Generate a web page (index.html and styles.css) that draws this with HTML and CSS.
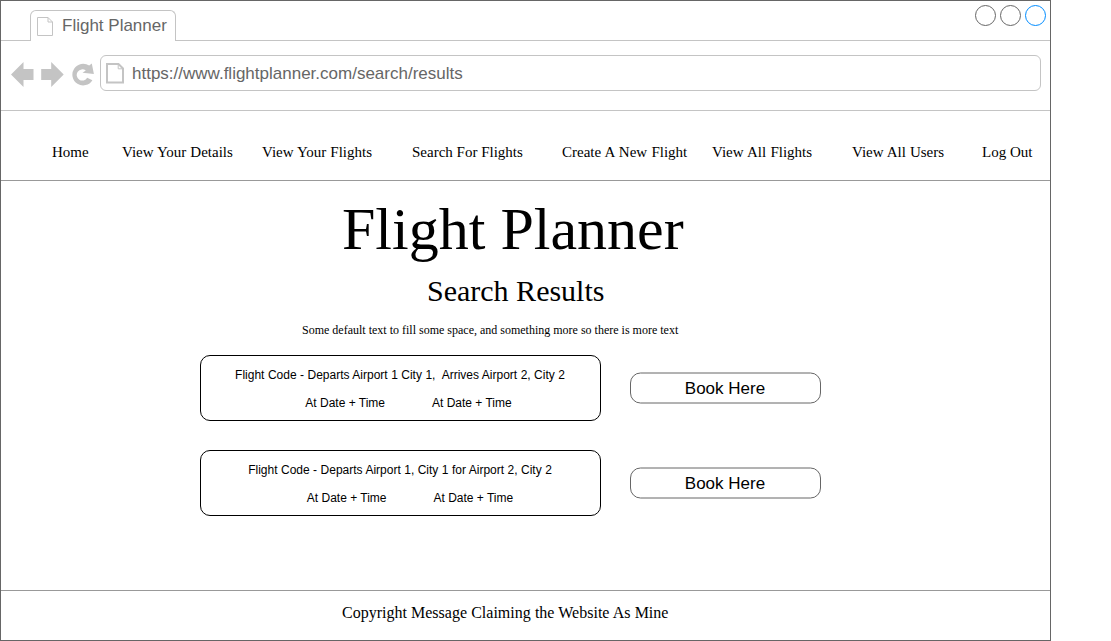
FILE: index.html
```html
<!DOCTYPE html>
<html lang="en">
<head>
<meta charset="utf-8">
<title>Flight Planner</title>
<link rel="stylesheet" href="styles.css">
</head>
<body>
<div class="window">
  <header class="tab-strip">
    <div class="tab">
      <svg class="tab-icon" width="18" height="20" viewBox="0 0 18 20"><path d="M1.5 1.5H12L16.5 6V19.5H1.5ZM12 1.5V6H16.5"/></svg>
      <span>Flight Planner</span>
    </div>
    <svg class="controls" width="74" height="24" viewBox="0 0 74 24">
      <circle cx="12.5" cy="12.5" r="10"/><circle cx="37.5" cy="12.5" r="10"/><circle class="accent" cx="62.5" cy="12.5" r="10"/>
    </svg>
  </header>
  <div class="toolbar">
    <svg class="nav-icons" width="84" height="26" viewBox="0 0 84 26">
      <path d="M0 12.5L12.5 0V7H22.5V18H12.5V25Z"/>
      <path d="M52.7 12.5L40.2 0V7H30.2V18H40.2V25Z"/>
      <path d="M80.8 1.5L82.9 12L71.5 10.7L74.8 8.6A5.6 5.6 0 1 0 76.2 15.7L81.4 18.2A10.8 10.8 0 1 1 78.2 3.6Z"/>
    </svg>
    <div class="address">
      <svg class="page-icon" width="20" height="22" viewBox="0 0 20 22"><path d="M2 2H13.5L18 6.5V20.5H2Z"/><path class="fold" d="M13.2 2V6.8H18"/></svg>
      <span class="url">https://www.flightplanner.com/search/results</span>
    </div>
  </div>
  <nav class="menu">
    <a>Home</a><a class="snug">View Your Details</a><a class="snug">View Your Flights</a><a>Search For Flights</a><a class="loose">Create A New Flight</a><a class="loose">View All Flights</a><a class="snug">View All Users</a><a>Log Out</a>
  </nav>
  <main class="content">
    <h1 class="title">Flight Planner</h1>
    <h2 class="subtitle">Search Results</h2>
    <p class="intro">Some default text to fill some space, and something more so there is more text</p>
    <section class="results">
      <div class="result">
        <div class="flight">
          <div class="route">Flight Code - Departs Airport 1 City 1,&nbsp; Arrives Airport 2, City 2</div>
          <div class="times"><span>At Date + Time</span><span>At Date + Time</span></div>
        </div>
        <div class="book">
          <svg class="book-frame" width="192" height="32" viewBox="0 0 192 32"><rect x=".5" y="1" width="190" height="30" rx="10"/></svg>
          <span class="book-label">Book Here</span>
        </div>
      </div>
      <div class="result">
        <div class="flight">
          <div class="route">Flight Code - Departs Airport 1, City 1 for Airport 2, City 2</div>
          <div class="times times-wide"><span>At Date + Time</span><span>At Date + Time</span></div>
        </div>
        <div class="book">
          <svg class="book-frame" width="192" height="32" viewBox="0 0 192 32"><rect x=".5" y="1" width="190" height="30" rx="10"/></svg>
          <span class="book-label">Book Here</span>
        </div>
      </div>
    </section>
  </main>
  <footer class="footer">Copyright Message Claiming the Website As Mine</footer>
</div>
</body>
</html>
```
FILE: styles.css
```css
* { box-sizing: border-box; }
body { margin: 0; background: #fff; color: #000; font-family: "Liberation Serif", serif; }
.window {
  width: 1051px;
  height: 641px;
  border: 1px solid #666;
  display: flex;
  flex-direction: column;
  overflow: hidden;
}
.tab-strip {
  height: 40px;
  flex: none;
  border-bottom: 1px solid #c4c4c4;
  display: flex;
  justify-content: space-between;
  padding: 9px 3px 0 29px;
}
.tab {
  width: 146px;
  height: 31px;
  border: 1px solid #c4c4c4;
  border-bottom: 0;
  border-radius: 6px 6px 0 0;
  background: #fff;
  display: flex;
  align-items: center;
  gap: 8px;
  padding: 1px 0 0 5px;
  color: #666;
  font: 17px/20px "Liberation Sans", sans-serif;
  white-space: nowrap;
}
.tab-icon { fill: none; stroke: #c4c4c4; flex: none; margin-bottom: 2px; }
.tab span { margin-bottom: 2px; }
.controls { fill: none; stroke: #666; margin-top: -7px; }
.accent { stroke: #008cff; }
.toolbar {
  height: 70px;
  flex: none;
  border-bottom: 1px solid #c4c4c4;
  display: flex;
  padding: 14px 0 0 10px;
}
.nav-icons { fill: #c4c4c4; margin-top: 7px; flex: none; }
.address {
  width: 941px;
  height: 36px;
  margin-left: 5px;
  border: 1px solid #c4c4c4;
  border-radius: 6px;
  display: flex;
  align-items: center;
  gap: 7px;
  padding: 0 0 0 4px;
  color: #666;
  font: 17px/20px "Liberation Sans", sans-serif;
}
.url { padding-top: 2px; }
.page-icon { fill: none; stroke: #c4c4c4; stroke-width: 2; }
.page-icon .fold { stroke-width: 1; }
.menu {
  height: 70px;
  flex: none;
  border-bottom: 1px solid #999;
  display: grid;
  grid-template-columns: 70px 140px 150px 150px 150px 140px 130px 68px;
  padding: 32px 0 0 51px;
  font-size: 15px;
  line-height: 18px;
  white-space: nowrap;
}
.loose { word-spacing: .5px; }
.snug { word-spacing: .25px; }
.content { height: 409px; flex: none; padding: 13px 0 0 199px; }
.title, .subtitle, .intro { margin: 0; font-weight: normal; white-space: nowrap; }
.title { font-size: 60px; line-height: 70px; padding-left: 142px; }
.subtitle { font-size: 30px; line-height: 36px; padding: 9px 0 0 227px; }
.intro { font-size: 12px; line-height: 14px; padding: 14px 0 0 102px; }
.results {
  display: flex;
  flex-direction: column;
  gap: 29px;
  padding-top: 18px;
  font-family: "Liberation Sans", sans-serif;
}
.result { display: flex; gap: 29px; align-items: center; }
.flight {
  width: 401px;
  height: 66px;
  border: 1px solid #000;
  border-radius: 10px;
  padding: 12px 1px 0 0;
  display: flex;
  flex-direction: column;
  gap: 14px;
  text-align: center;
  font-size: 12px;
  line-height: 14px;
  white-space: nowrap;
}
.route { word-spacing: .13px; }
.times { display: flex; justify-content: center; gap: 47px; padding-left: 17px; }
.times-wide { padding-left: 20px; }
.book { display: grid; width: 192px; height: 32px; }
.book-frame { grid-area: 1 / 1; fill: none; stroke: #666; }
.book-label { grid-area: 1 / 1; text-align: center; font-size: 17px; line-height: 32px; padding: 1px 2px 0 0; }
.footer {
  flex: 1;
  border-top: 1px solid #999;
  padding: 13px 0 0 341px;
  font-size: 16px;
  line-height: 18px;
  word-spacing: .15px;
}
```
